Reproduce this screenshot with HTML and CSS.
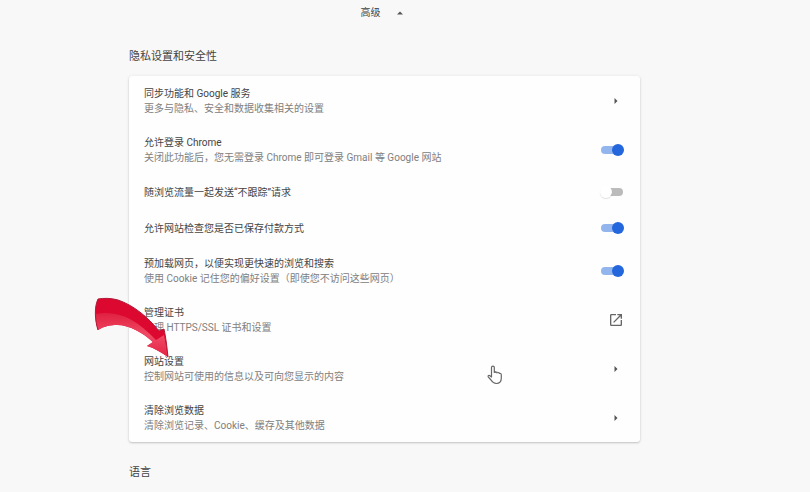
FILE: index.html
```html
<!DOCTYPE html>
<html lang="zh-CN">
<head>
    <meta charset="UTF-8">
    <meta name="viewport" content="width=device-width, initial-scale=1.0">
    <title>设置</title>
    <link rel="stylesheet" href="styles.css">
</head>
<body>
    <main class="settings">
        <button class="advanced-toggle" type="button">
            <span>高级</span>
            <svg width="6" height="4" viewBox="0 0 6 4"><path d="M0 3.5L3 0.5L6 3.5Z" fill="#555"/></svg>
        </button>

        <h2>隐私设置和安全性</h2>
        <div class="card">
            <div class="row">
                <div class="text">
                    <div class="title">同步功能和 Google 服务</div>
                    <div class="sub">更多与隐私、安全和数据收集相关的设置</div>
                </div>
                <button class="icon-btn" type="button" aria-label="同步功能和 Google 服务">
                    <svg width="4" height="6" viewBox="0 0 4 6"><path d="M0.5 0L3.5 3L0.5 6Z" fill="#555"/></svg>
                </button>
            </div>
            <div class="row">
                <label class="text" for="signin">
                    <span class="title">允许登录 Chrome</span>
                    <span class="sub">关闭此功能后，您无需登录 Chrome 即可登录 Gmail 等 Google 网站</span>
                </label>
                <input class="switch" type="checkbox" id="signin" checked>
            </div>
            <div class="row row-single">
                <label class="text" for="dnt">
                    <span class="title">随浏览流量一起发送“不跟踪”请求</span>
                </label>
                <input class="switch" type="checkbox" id="dnt">
            </div>
            <div class="row row-single">
                <label class="text" for="payment">
                    <span class="title">允许网站检查您是否已保存付款方式</span>
                </label>
                <input class="switch" type="checkbox" id="payment" checked>
            </div>
            <div class="row">
                <label class="text" for="preload">
                    <span class="title">预加载网页，以便实现更快速的浏览和搜索</span>
                    <span class="sub">使用 Cookie 记住您的偏好设置（即使您不访问这些网页）</span>
                </label>
                <input class="switch" type="checkbox" id="preload" checked>
            </div>
            <div class="row">
                <div class="text">
                    <div class="title">管理证书</div>
                    <div class="sub">管理 HTTPS/SSL 证书和设置</div>
                </div>
                <button class="icon-btn" type="button" aria-label="管理证书">
                    <svg width="16" height="16" viewBox="0 0 24 24"><path d="M19 19H5V5h7V3H5a2 2 0 0 0-2 2v14a2 2 0 0 0 2 2h14c1.1 0 2-.9 2-2v-7h-2v7zM14 3v2h3.59l-9.83 9.83 1.41 1.41L19 6.41V10h2V3h-7z" fill="#666"/></svg>
                </button>
            </div>
            <div class="row">
                <div class="text">
                    <div class="title">网站设置</div>
                    <div class="sub">控制网站可使用的信息以及可向您显示的内容</div>
                </div>
                <button class="icon-btn" type="button" aria-label="网站设置">
                    <svg width="4" height="6" viewBox="0 0 4 6"><path d="M0.5 0L3.5 3L0.5 6Z" fill="#555"/></svg>
                </button>
                <svg class="pointer-arrow" width="76" height="62" viewBox="0 0 76 62">
                    <defs>
                        <linearGradient id="shine" x1="0" y1="0" x2="0" y2="1">
                            <stop offset="0" stop-color="#e0203f"/>
                            <stop offset="0.5" stop-color="#f04b66"/>
                            <stop offset="1" stop-color="#e42346"/>
                        </linearGradient>
                    </defs>
                    <path d="M4 2C10 1 17 1 24 3C39 8 54 20 65 34L70 32C72 41 73 51 74 60C67 55 60 51 53 49L59 45C49 36 36 28 23 28C17 28 10 29 4 33C1 24 0 10 4 2Z" fill="#dc0830"/>
                    <path d="M2 17C24 13 42 22 62 43L70 38L74 60C67 55 60 51 53 49L59 45C49 36 36 28 23 28C17 28 10 29 4 33C2 27 1 22 2 17Z" fill="url(#shine)"/>
                    <path d="M4 33C1 24 0 10 4 2C10 1 17 1 24 3C39 8 54 20 65 34L70 32C72 41 73 51 74 60" fill="none" stroke="#b01a38" stroke-width="1"/>
                </svg>
                <svg class="hand" width="16" height="20" viewBox="0 0 16 20">
                    <path d="M4.5 12V2.5a1.4 1.4 0 0 1 2.8 0V7.5c.5-1 2.3-.8 2.6.4.6-.8 2.1-.5 2.4.5.8-.4 2 0 2 1.3V13c0 3.5-2 5.5-5 5.5-3 0-4-1.5-5.3-3.5L1.2 11.8c-.5-1.2.8-1.8 1.8-1z" fill="#fff" stroke="#666" stroke-width="1.2" stroke-linejoin="round"/>
                    <path d="M7.3 7.5h5" stroke="#777" stroke-width="1"/>
                </svg>
            </div>
            <div class="row">
                <div class="text">
                    <div class="title">清除浏览数据</div>
                    <div class="sub">清除浏览记录、Cookie、缓存及其他数据</div>
                </div>
                <button class="icon-btn" type="button" aria-label="清除浏览数据">
                    <svg width="4" height="6" viewBox="0 0 4 6"><path d="M0.5 0L3.5 3L0.5 6Z" fill="#555"/></svg>
                </button>
            </div>
        </div>

        <h2>语言</h2>
    </main>
</body>
</html>
```
FILE: styles.css
```css
body {
    margin: 0;
    background-color: #f8f8f8;
    color: #444;
    font-family: Roboto, "Noto Sans CJK SC", sans-serif;
    font-size: 10px;
    line-height: 15px;
}

.settings {
    margin: 0 170px 0 129px;
    padding-top: 5px;
}

button {
    padding: 0;
    border: none;
    background: none;
    color: inherit;
    font: inherit;
    cursor: pointer;
}

.advanced-toggle {
    display: flex;
    align-items: center;
    gap: 16px;
    margin: 0 auto;
    padding-right: 6px;
    color: #444;
}

h2 {
    margin: 29px 0 11px;
    font-size: 11px;
    font-weight: 400;
    line-height: 16px;
    color: #444;
}

.card + h2 {
    margin-top: 23px;
}

.card {
    background-color: #fefefe;
    border-radius: 3px;
    box-shadow: 0 1px 2px rgba(0, 0, 0, 0.2), 0 0 4px rgba(0, 0, 0, 0.06);
}

.row {
    position: relative;
    display: flex;
    align-items: center;
    min-height: 49px;
    padding: 0 16px 0 15px;
}

.row-single {
    min-height: 36px;
}

.text {
    flex: 1;
}

.title,
.sub {
    display: block;
}

.title {
    color: #444;
}

.sub {
    color: #808080;
}

.icon-btn {
    display: flex;
    align-items: center;
    justify-content: center;
    width: 16px;
    height: 16px;
}

.switch {
    position: relative;
    appearance: none;
    width: 24px;
    height: 12px;
    margin: 0;
    cursor: pointer;
}

.switch::before {
    content: "";
    position: absolute;
    inset: 2px 1px;
    border-radius: 4px;
    background-color: #bbb;
}

.switch::after {
    content: "";
    position: absolute;
    top: 0;
    left: 0;
    width: 12px;
    height: 12px;
    border-radius: 50%;
    background-color: #fff;
    box-shadow: 0 1px 1px rgba(0, 0, 0, 0.12);
}

.switch:checked::before {
    background-color: #93b5ee;
}

.switch:checked::after {
    left: 12px;
    background-color: #2466dc;
    box-shadow: none;
}

.pointer-arrow {
    position: absolute;
    top: -47px;
    left: -35px;
    pointer-events: none;
}

.hand {
    position: absolute;
    top: 21px;
    left: 358px;
    pointer-events: none;
}
```
